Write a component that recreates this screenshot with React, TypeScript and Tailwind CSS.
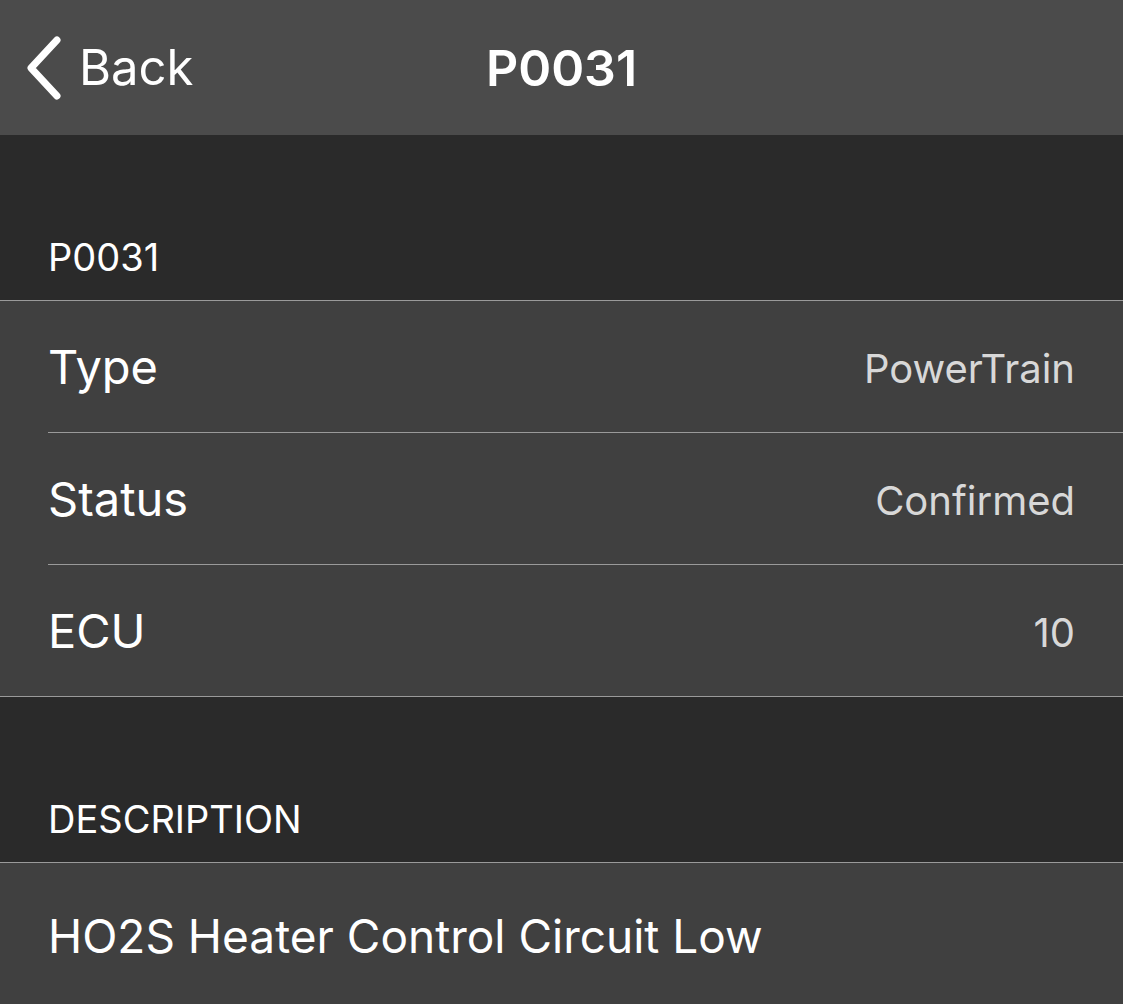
const rows = [
  { label: "Type", value: "PowerTrain" },
  { label: "Status", value: "Confirmed" },
  { label: "ECU", value: "10" },
];

const ChevronLeft = () => (
  <svg width="40" height="66" viewBox="0 0 40 66" fill="none">
    <path
      d="M31 5 L5 33 L31 61"
      stroke="white"
      strokeWidth="7"
      strokeLinecap="round"
      strokeLinejoin="round"
    />
  </svg>
);

const SectionHeader = ({ title }: { title: string }) => (
  <div className="flex h-[166px] items-end border-b border-[#9a9a9a] bg-[#2a2a2a] px-12 pb-[24px]">
    <span className="text-[38px] leading-none text-white">{title}</span>
  </div>
);

export default function App() {
  return (
    <div className="min-h-screen bg-[#2a2a2a] font-['Inter',sans-serif] text-white">
      {/* nav bar */}
      <div className="relative flex h-[135px] items-center bg-[#4b4b4b]">
        <div className="flex items-center pl-[26px]">
          <ChevronLeft />
          <span className="ml-[13px] text-[49px] leading-none">Back</span>
        </div>
        <div className="absolute inset-x-0 flex justify-center pointer-events-none">
          <span className="text-[50px] font-semibold leading-none">P0031</span>
        </div>
      </div>

      <SectionHeader title="P0031" />

      <div className="bg-[#404040]">
        {rows.map((r, i) => (
          <div key={r.label} className="pl-12">
            <div
              className={
                i < rows.length - 1
                  ? "flex h-[132px] items-center justify-between border-b border-[#9a9a9a] pr-12"
                  : "flex h-[131px] items-center justify-between pr-12"
              }
            >
              <span className="text-[47px] leading-none">{r.label}</span>
              <span className="pt-[5px] text-[40px] leading-none text-[#d8d8d8]">{r.value}</span>
            </div>
          </div>
        ))}
      </div>
      <div className="h-px bg-[#9a9a9a]" />

      <SectionHeader title="DESCRIPTION" />

      <div className="flex h-[146px] items-center bg-[#404040] px-12">
        <span className="text-[46px] leading-none">HO2S Heater Control Circuit Low</span>
      </div>
    </div>
  );
}
